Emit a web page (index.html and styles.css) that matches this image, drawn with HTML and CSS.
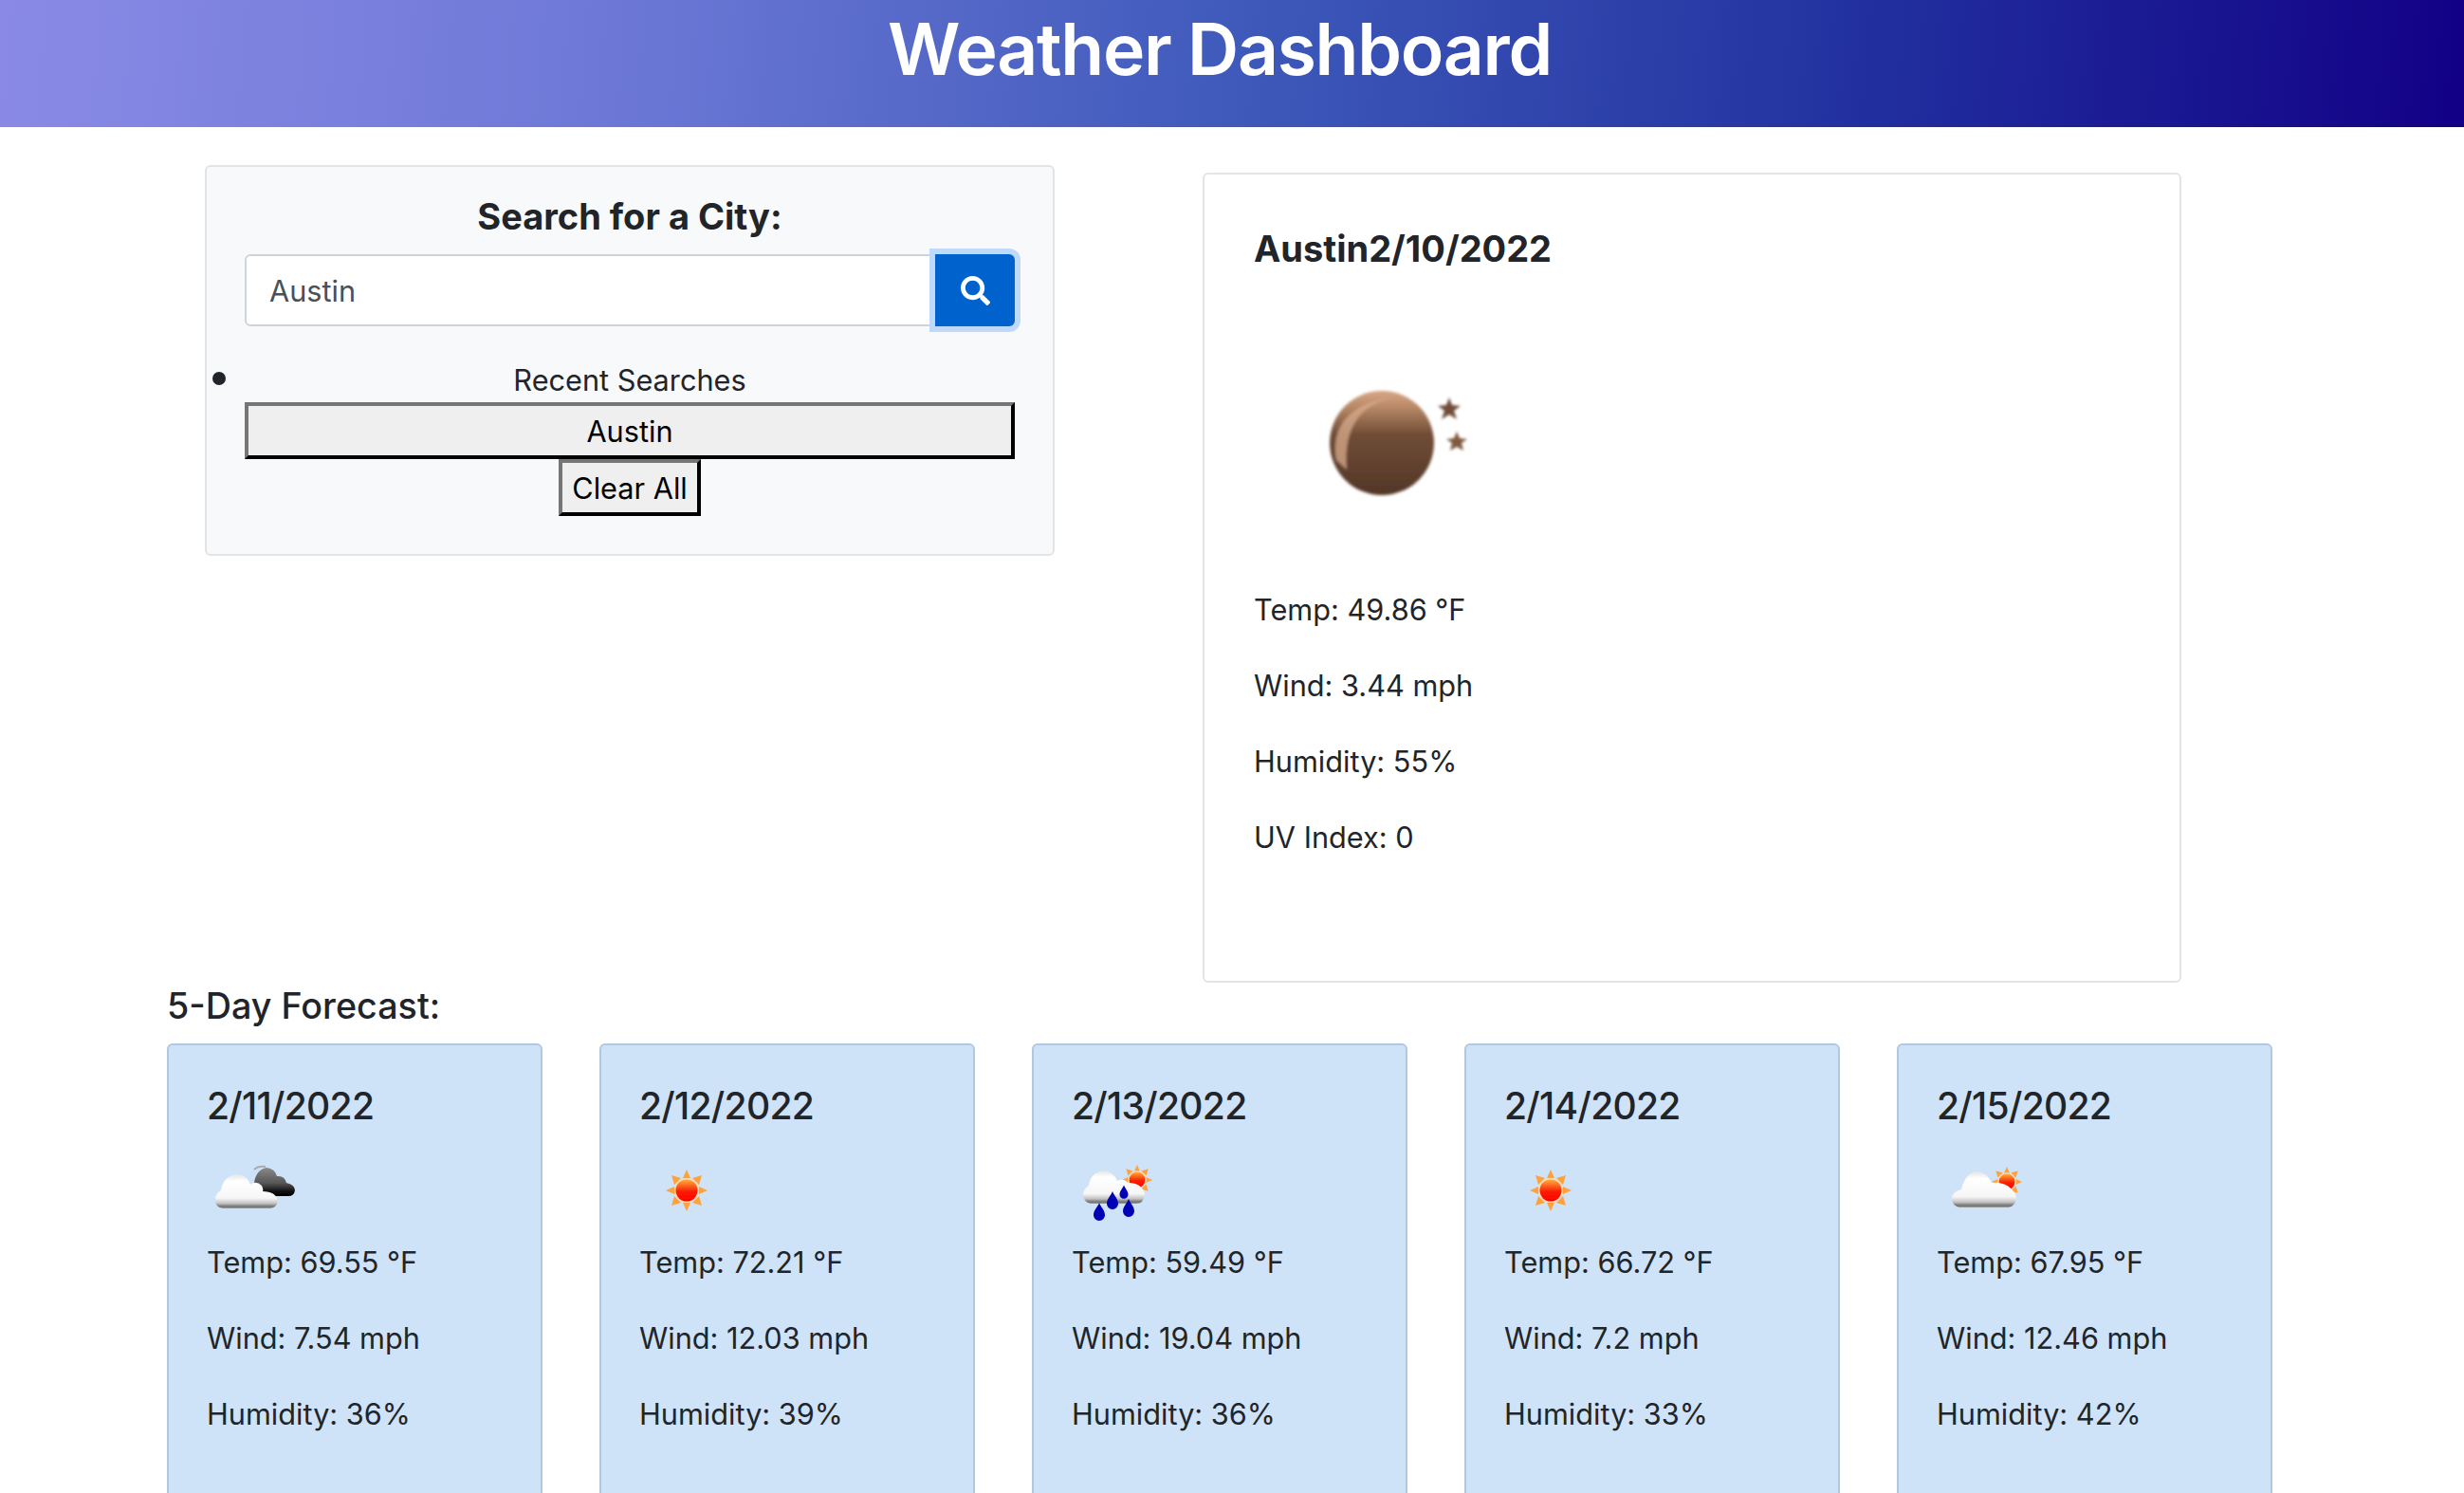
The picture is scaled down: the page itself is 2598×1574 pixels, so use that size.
FILE: index.html
```html
<!DOCTYPE html>
<html lang="en">
<head>
    <meta charset="UTF-8">
    <meta name="viewport" content="width=device-width, initial-scale=1.0">
    <title>Weather Dashboard</title>
    <link rel="stylesheet" href="styles.css">
</head>
<body>
    <svg class="sprite" aria-hidden="true">
        <defs>
            <linearGradient id="cloudWhite" x1="0" y1="0" x2="0" y2="1">
                <stop offset="0" stop-color="#e4e4e4"/>
                <stop offset="0.2" stop-color="#ffffff"/>
                <stop offset="0.7" stop-color="#f6f6f6"/>
                <stop offset="0.85" stop-color="#c4c4c4"/>
                <stop offset="0.95" stop-color="#6f6f6f"/>
                <stop offset="1" stop-color="#a5a5a5"/>
            </linearGradient>
            <linearGradient id="cloudDark" x1="0" y1="0" x2="0" y2="1">
                <stop offset="0" stop-color="#8a8a8a"/>
                <stop offset="0.55" stop-color="#555555"/>
                <stop offset="0.85" stop-color="#0c0c0c"/>
                <stop offset="1" stop-color="#000000"/>
            </linearGradient>
            <linearGradient id="sunDisc" x1="0" y1="0" x2="0" y2="1">
                <stop offset="0" stop-color="#ffb040"/>
                <stop offset="0.55" stop-color="#fb1c00"/>
                <stop offset="1" stop-color="#ff0000"/>
            </linearGradient>
            <linearGradient id="moonFill" x1="0" y1="0" x2="0" y2="1">
                <stop offset="0" stop-color="#d9a684"/>
                <stop offset="0.15" stop-color="#b98a68"/>
                <stop offset="0.42" stop-color="#704c36"/>
                <stop offset="1" stop-color="#533627"/>
            </linearGradient>
            <filter id="soft"><feGaussianBlur stdDeviation="0.5"/></filter>
            <filter id="softer"><feGaussianBlur stdDeviation="1.8"/></filter>
            <g id="sun">
                <path fill="#ffa23c" d="M0-22 4-13-4-13ZM0 22 4 13-4 13ZM-22 0-13 4-13-4ZM22 0 13 4 13-4ZM-16-16-6-13-13-6ZM16-16 6-13 13-6ZM-16 16-6 13-13 6ZM16 16 6 13 13 6Z"/>
                <circle r="13" fill="#ffd9a0"/>
                <circle r="11.5" fill="url(#sunDisc)"/>
            </g>
            <path id="drop" fill="#0000b4" d="M0-10C2-5 6-2 6 3A6 6 0 0 1-6 3C-6-2-2-5 0-10Z"/>
        </defs>
    </svg>

    <header class="site-header">
        <h1>Weather Dashboard</h1>
    </header>

    <main class="page">
        <div class="top-row">
            <section class="search-panel">
                <h2>Search for a City:</h2>
                <div class="search-group">
                    <input class="search-input" type="text" value="Austin">
                    <button class="search-btn" type="button" aria-label="Search">
                        <svg viewBox="0 0 512 512" width="31" height="31"><path fill="#fff" d="M505 442.7L405.3 343c-4.5-4.5-10.6-7-17-7H372c27.6-35.3 44-79.7 44-128C416 93.1 322.9 0 208 0S0 93.1 0 208s93.1 208 208 208c48.3 0 92.7-16.4 128-44v16.3c0 6.4 2.5 12.5 7 17l99.7 99.7c9.4 9.4 24.6 9.4 33.9 0l28.3-28.3c9.4-9.4 9.4-24.6.1-34zM208 336c-70.7 0-128-57.2-128-128 0-70.7 57.2-128 128-128 70.7 0 128 57.2 128 128 0 70.7-57.2 128-128 128z"/></svg>
                    </button>
                </div>
                <ul class="recent">
                    <li>
                        Recent Searches
                        <button class="plain-btn wide" type="button">Austin</button>
                        <button class="plain-btn" type="button">Clear All</button>
                    </li>
                </ul>
            </section>

            <section class="current-card">
                <h2>Austin2/10/2022</h2>
                <svg class="current-icon" viewBox="0 0 240 220" width="240" height="220">
                    <g filter="url(#softer)">
                        <circle cx="135" cy="107" r="55" fill="url(#moonFill)"/>
                        <path d="M87 125C80 85 108 62 150 59C115 64 94 88 98 135Z" fill="#d8ab8c" opacity="0.75"/>
                        <path fill="#6f4c38" d="M206 59l3 8 9 1-7 5 3 9-8-5-8 5 3-9-7-5 9-1Z"/>
                        <path fill="#80583f" d="M214 95l3 7 8 1-6 4 2 8-7-4-7 4 2-8-6-4 8-1Z"/>
                    </g>
                </svg>
                <p>Temp: 49.86 °F</p>
                <p>Wind: 3.44 mph</p>
                <p>Humidity: 55%</p>
                <p>UV Index: 0</p>
            </section>
        </div>

        <h3 class="forecast-title">5-Day Forecast:</h3>
        <div class="forecast-row">
            <article class="day-card">
                <h4>2/11/2022</h4>
                <svg class="day-icon" viewBox="0 0 100 80">
                    <g filter="url(#soft)">
                        <path d="M50 22Q54 18 62 19" fill="none" stroke="#aaa" stroke-width="2"/>
                        <path fill="url(#cloudDark)" d="M55 50Q48 44 50 36Q52 22 63 20Q72 21 74 29Q82 28 84 36Q93 38 93 44Q92 50 86 50Z"/>
                        <path fill="url(#cloudWhite)" d="M17 63Q9 62 9 54Q9 47 15 44Q17 30 30 27Q42 27 46 38Q52 33 58 39Q60 43 59 45Q73 45 75 55Q74 62 67 63Z"/>
                    </g>
                </svg>
                <p>Temp: 69.55 °F</p>
                <p>Wind: 7.54 mph</p>
                <p>Humidity: 36%</p>
            </article>
            <article class="day-card">
                <h4>2/12/2022</h4>
                <svg class="day-icon" viewBox="0 0 100 80">
                    <use href="#sun" x="50" y="44" filter="url(#soft)"/>
                </svg>
                <p>Temp: 72.21 °F</p>
                <p>Wind: 12.03 mph</p>
                <p>Humidity: 39%</p>
            </article>
            <article class="day-card">
                <h4>2/13/2022</h4>
                <svg class="day-icon" viewBox="0 0 100 80">
                    <g filter="url(#soft)">
                        <g transform="translate(69 33) scale(0.73)"><use href="#sun"/></g>
                        <path fill="url(#cloudWhite)" d="M20 58Q12 56 12 48Q13 42 18 39Q20 25 33 23Q44 24 48 34Q54 30 60 36Q74 36 77 48Q76 58 68 58Z"/>
                        <use href="#drop" x="29" y="67"/>
                        <use href="#drop" x="43" y="55"/>
                        <use href="#drop" x="60" y="63"/>
                        <g transform="translate(55 46) scale(0.75)"><use href="#drop"/></g>
                    </g>
                </svg>
                <p>Temp: 59.49 °F</p>
                <p>Wind: 19.04 mph</p>
                <p>Humidity: 36%</p>
            </article>
            <article class="day-card">
                <h4>2/14/2022</h4>
                <svg class="day-icon" viewBox="0 0 100 80">
                    <use href="#sun" x="49" y="44" filter="url(#soft)"/>
                </svg>
                <p>Temp: 66.72 °F</p>
                <p>Wind: 7.2 mph</p>
                <p>Humidity: 33%</p>
            </article>
            <article class="day-card">
                <h4>2/15/2022</h4>
                <svg class="day-icon" viewBox="0 0 100 80">
                    <g filter="url(#soft)">
                        <g transform="translate(74 35) scale(0.73)"><use href="#sun"/></g>
                        <path fill="url(#cloudWhite)" d="M24 62Q16 60 16 52Q17 45 26 43Q30 26 42 24Q52 24 58 36Q76 34 84 50Q84 60 76 62Z"/>
                    </g>
                </svg>
                <p>Temp: 67.95 °F</p>
                <p>Wind: 12.46 mph</p>
                <p>Humidity: 42%</p>
            </article>
        </div>
    </main>
</body>
</html>
```

FILE: styles.css
```css
* {
    box-sizing: border-box;
}

html, body {
    height: 100%;
    overflow: hidden;
}

body {
    margin: 0;
    background: #fff;
    color: #212529;
    font-family: Inter, "Noto Sans", sans-serif;
    font-size: 30.7px;
    line-height: 40px;
}

p {
    margin: 0 0 40px;
}

.sprite {
    display: block;
    width: 0;
    height: 0;
}

.site-header {
    height: 134px;
    padding-right: 26px;
    background: linear-gradient(95deg, #8a8ae6 0%, #6d78d6 25%, #3f5abb 50%, #22319f 75%, #120086 100%);
    text-align: center;
}

.site-header h1 {
    margin: 0;
    color: #fff;
    font-size: 75px;
    font-weight: 600;
    letter-spacing: -1.3px;
    line-height: 104px;
}

.page {
    padding: 40px 0 0 176px;
}

.top-row {
    display: flex;
    align-items: flex-start;
    padding-left: 40px;
}

.search-panel {
    width: 896px;
    height: 412px;
    padding: 32px 40px 0;
    background: #f8f9fa;
    border: 2px solid #e3e4e5;
    border-radius: 6px;
}

.search-panel h2 {
    margin: 0 0 20px;
    font-size: 38px;
    font-weight: 700;
    line-height: 40px;
    text-align: center;
}

.search-group {
    display: flex;
    height: 76px;
}

.search-input {
    flex: 1;
    min-width: 0;
    padding: 2px 24px 0;
    border: 2px solid #ced4da;
    border-radius: 6px 0 0 6px;
    background: #fff;
    color: #495057;
    font: inherit;
}

.search-btn {
    display: flex;
    align-items: center;
    justify-content: center;
    width: 84px;
    margin-left: 3px;
    padding: 0;
    background: #0062cc;
    border: 0;
    border-radius: 0 6px 6px 0;
    box-shadow: 0 0 0 6px #bfd9fb;
}

.recent {
    margin: 33px 0 0;
    padding: 0;
    text-align: center;
}

.recent li {
    line-height: 40px;
}

.recent li::marker {
    font-size: 42px;
}

.plain-btn {
    display: block;
    margin: 0 auto;
    height: 60px;
    padding: 2px 10px 0;
    background: #efefef;
    border: 4px outset #767676;
    border-color: #767676 #222 #222 #767676;
    color: #000;
    font: inherit;
}

.plain-btn.wide {
    width: 100%;
    margin-top: 3px;
}

.current-card {
    width: 1032px;
    height: 854px;
    margin: 8px 0 0 156px;
    padding: 54px 52px;
    border: 2px solid #e3e4e5;
    border-radius: 6px;
}

.current-card h2 {
    margin: 0;
    font-size: 38px;
    font-weight: 700;
    line-height: 48px;
}

.current-icon {
    display: block;
    margin: 74px 0 43px;
}

.forecast-title {
    margin: 0;
    padding-top: 4px;
    height: 64px;
    font-size: 37.7px;
    font-weight: 500;
    line-height: 40px;
}

.forecast-row {
    display: flex;
    gap: 60px;
}

.day-card {
    width: 396px;
    height: 520px;
    flex: none;
    padding: 40px 40px;
    background: #cfe3f8;
    border: 2px solid #b0c8e0;
    border-radius: 6px;
}

.day-card h4 {
    margin: 0;
    font-size: 39px;
    font-weight: 500;
    letter-spacing: -0.7px;
    line-height: 48px;
}

.day-icon {
    display: block;
    width: 100px;
    height: 80px;
    margin: 21px 0 20px;
    overflow: visible;
}
```
